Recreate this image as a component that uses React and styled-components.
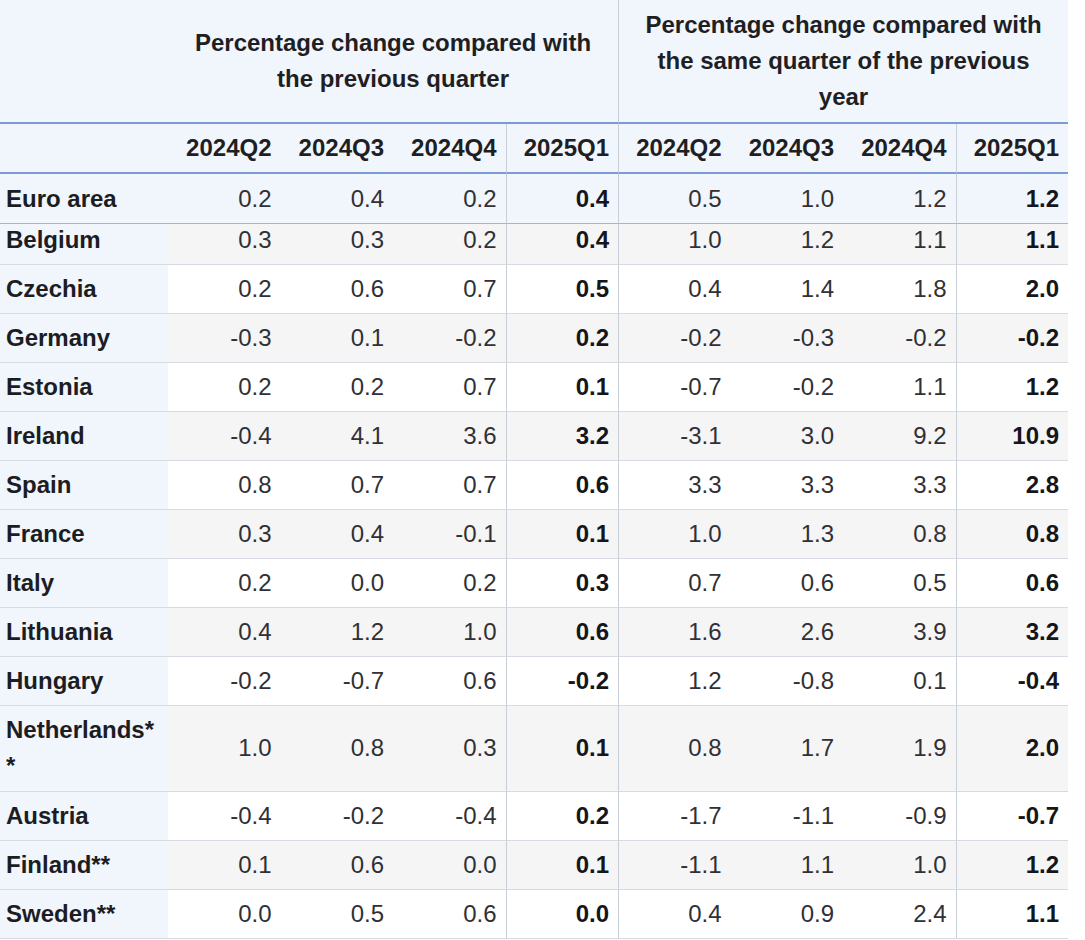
import React from 'react';
import styled, { createGlobalStyle } from 'styled-components';

const GlobalStyle = createGlobalStyle`
  html, body {
    margin: 0;
    padding: 0;
    background: #ffffff;
  }
  body {
    font-family: "Liberation Sans", Arial, sans-serif;
    color: #1f1f23;
  }
`;

const periods = ['2024Q2', '2024Q3', '2024Q4', '2025Q1'];

const rows = [
  { name: 'Euro area', q: ['0.2', '0.4', '0.2', '0.4'], y: ['0.5', '1.0', '1.2', '1.2'] },
  { name: 'Belgium', q: ['0.3', '0.3', '0.2', '0.4'], y: ['1.0', '1.2', '1.1', '1.1'] },
  { name: 'Czechia', q: ['0.2', '0.6', '0.7', '0.5'], y: ['0.4', '1.4', '1.8', '2.0'] },
  { name: 'Germany', q: ['-0.3', '0.1', '-0.2', '0.2'], y: ['-0.2', '-0.3', '-0.2', '-0.2'] },
  { name: 'Estonia', q: ['0.2', '0.2', '0.7', '0.1'], y: ['-0.7', '-0.2', '1.1', '1.2'] },
  { name: 'Ireland', q: ['-0.4', '4.1', '3.6', '3.2'], y: ['-3.1', '3.0', '9.2', '10.9'] },
  { name: 'Spain', q: ['0.8', '0.7', '0.7', '0.6'], y: ['3.3', '3.3', '3.3', '2.8'] },
  { name: 'France', q: ['0.3', '0.4', '-0.1', '0.1'], y: ['1.0', '1.3', '0.8', '0.8'] },
  { name: 'Italy', q: ['0.2', '0.0', '0.2', '0.3'], y: ['0.7', '0.6', '0.5', '0.6'] },
  { name: 'Lithuania', q: ['0.4', '1.2', '1.0', '0.6'], y: ['1.6', '2.6', '3.9', '3.2'] },
  { name: 'Hungary', q: ['-0.2', '-0.7', '0.6', '-0.2'], y: ['1.2', '-0.8', '0.1', '-0.4'] },
  { name: 'Netherlands**', q: ['1.0', '0.8', '0.3', '0.1'], y: ['0.8', '1.7', '1.9', '2.0'] },
  { name: 'Austria', q: ['-0.4', '-0.2', '-0.4', '0.2'], y: ['-1.7', '-1.1', '-0.9', '-0.7'] },
  { name: 'Finland**', q: ['0.1', '0.6', '0.0', '0.1'], y: ['-1.1', '1.1', '1.0', '1.2'] },
  { name: 'Sweden**', q: ['0.0', '0.5', '0.6', '0.0'], y: ['0.4', '0.9', '2.4', '1.1'] },
];

const HEAD_BG = '#f1f5fc';
const STRIPE_BG = '#f5f5f5';
const BLUE_LINE = '#7c9bd6';
const GRID_LINE = '#d6dbe3';
const DIVIDER = '#c9cfd8';

// row padding per variant: the euro area row sits a pixel lower, belgium is
// partly tucked under it, and the two-line netherlands row is a pixel taller
const pad = (v) => {
  if (v === 'top') return ['7px', '6px', '36px'];
  if (v === 'tucked') return ['0', '8px', '32px'];
  if (v === 'tall') return ['6px', '7px', '36px'];
  return ['6px', '6px', '36px'];
};

function App() {
  return (
    <Page>
      <GlobalStyle />
      <Table>
        <colgroup>
          <LabelCol />
          {Array.from({ length: 8 }).map((_, i) => (
            <ValueCol key={i} />
          ))}
        </colgroup>
        <thead>
          <tr>
            <GroupHead />
            <GroupHead colSpan={4}>
              Percentage change compared with the previous quarter
            </GroupHead>
            <GroupHead colSpan={4} $divider>
              Percentage change compared with the same quarter of the previous year
            </GroupHead>
          </tr>
          <tr>
            <PeriodHead />
            {[...periods, ...periods].map((p, i) => (
              <PeriodHead key={i} $divider={i === 3 || i === 4 || i === 7}>
                {p}
              </PeriodHead>
            ))}
          </tr>
        </thead>
        <tbody>
          {rows.map((row, r) => {
            const highlight = r === 0;
            const striped = r > 0 && r % 2 === 1;
            const variant = r === 0 ? 'top' : r === 1 ? 'tucked' : row.name === 'Netherlands**' ? 'tall' : 'plain';
            const values = [...row.q, ...row.y];
            return (
              <Row key={row.name} $highlight={highlight} $striped={striped}>
                <Label $highlight={highlight} $variant={variant}>{row.name}</Label>
                {values.map((v, i) => (
                  <Value
                    key={i}
                    $highlight={highlight}
                    $variant={variant}
                    $strong={i === 3 || i === 7}
                    $divider={i === 3 || i === 4 || i === 7}
                  >
                    {v}
                  </Value>
                ))}
              </Row>
            );
          })}
        </tbody>
      </Table>
    </Page>
  );
}

const Page = styled.div`
  width: 1085px;
  min-height: 940px;
  background: #ffffff;
`;

const Table = styled.table`
  width: 1068px;
  table-layout: fixed;
  border-collapse: separate;
  border-spacing: 0;
  font-size: 24px;
  line-height: 36px;
`;

const LabelCol = styled.col`
  width: 168px;
`;

const ValueCol = styled.col`
  width: 112.5px;
`;

const GroupHead = styled.th`
  background: ${HEAD_BG};
  padding: 7px 14px;
  text-align: center;
  vertical-align: middle;
  font-weight: 700;
  color: #1f1f23;
  border-bottom: 2px solid ${BLUE_LINE};
  border-left: ${(p) => (p.$divider ? `1px solid ${DIVIDER}` : 'none')};
`;

const PeriodHead = styled.th`
  background: ${HEAD_BG};
  padding: 6px 9px 6px 6px;
  text-align: right;
  font-weight: 700;
  color: #1f1f23;
  white-space: nowrap;
  border-bottom: 2px solid ${BLUE_LINE};
  border-left: ${(p) => (p.$divider ? `1px solid ${DIVIDER}` : 'none')};
`;

const Row = styled.tr`
  background: ${(p) => (p.$highlight ? HEAD_BG : p.$striped ? STRIPE_BG : '#ffffff')};
`;

const Label = styled.td`
  background: ${HEAD_BG};
  padding: ${(p) => `${pad(p.$variant)[0]} 10px ${pad(p.$variant)[1]} 6px`};
  line-height: ${(p) => pad(p.$variant)[2]};
  text-align: left;
  vertical-align: middle;
  font-weight: 700;
  color: #1c1d22;
  overflow-wrap: anywhere;
  border-bottom: 1px solid ${(p) => (p.$highlight ? '#9fb3dc' : GRID_LINE)};
`;

const Value = styled.td`
  padding: ${(p) => `${pad(p.$variant)[0]} 9px ${pad(p.$variant)[1]} 6px`};
  line-height: ${(p) => pad(p.$variant)[2]};
  text-align: right;
  vertical-align: middle;
  font-weight: ${(p) => (p.$strong ? 700 : 400)};
  color: ${(p) => (p.$strong ? '#15161a' : '#303035')};
  white-space: nowrap;
  border-bottom: 1px solid ${(p) => (p.$highlight ? '#9fb3dc' : GRID_LINE)};
  border-left: ${(p) => (p.$divider ? `1px solid ${DIVIDER}` : 'none')};
`;

export default App;
